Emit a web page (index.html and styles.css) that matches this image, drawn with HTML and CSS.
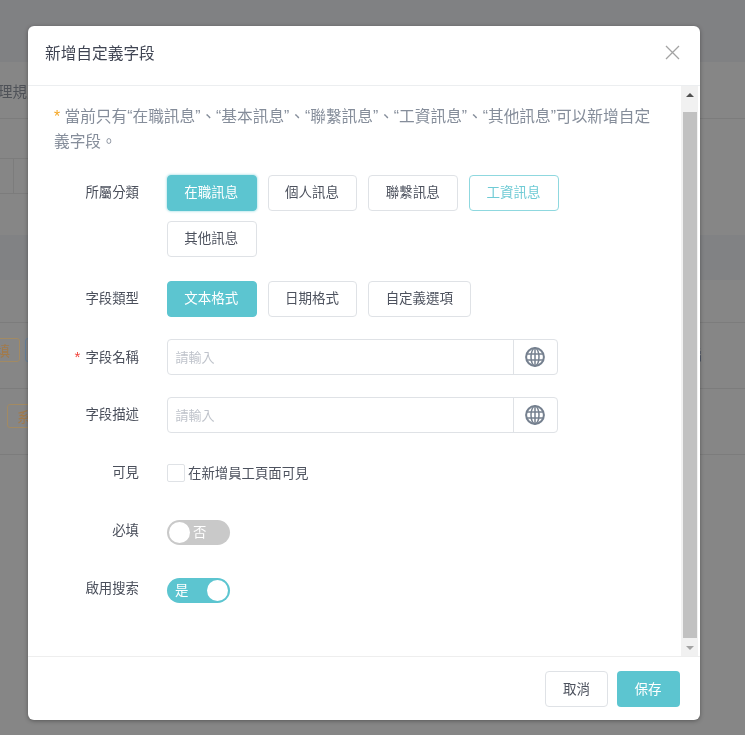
FILE: index.html
```html
<!DOCTYPE html>
<html lang="zh-Hant">
<head>
<meta charset="utf-8">
<title>新增自定義字段</title>
<link rel="stylesheet" href="styles.css">
</head>
<body>
<div class="page">
  <div class="bg">
    <div class="bg-band bg-top"></div>
    <div class="bg-band bg-title"><span class="bg-heading">理規則</span></div>
    <div class="bg-band bg-gap"></div>
    <div class="bg-band bg-head"><div class="bg-cells"><span class="bg-cell"></span></div></div>
    <div class="bg-band bg-spacer"></div>
    <div class="bg-band bg-blue"></div>
    <div class="bg-band bg-after"></div>
    <div class="bg-band bg-row">
      <span class="tag tag-a">必填</span><span class="tag tag-b">可見</span>
      <span class="bg-end">編</span>
    </div>
    <div class="bg-band bg-row"><span class="tag tag-c">系統</span></div>
  </div>

  <div class="modal">
    <header class="modal-head">
      <h1 class="modal-title">新增自定義字段</h1>
      <svg class="close" width="15" height="15" viewBox="0 0 15 15"><path d="M1 1l13 13M14 1L1 14" fill="none" stroke="#a3a3a3" stroke-width="1.3"/></svg>
    </header>
    <div class="modal-body">
      <div class="content">
        <p class="notice"><span class="star">*</span> 當前只有“在職訊息”、“基本訊息”、“聯繫訊息”、“工資訊息”、“其他訊息”可以新增自定義字段。</p>
        <div class="row row-wrap">
          <span class="label">所屬分類</span>
          <div class="options">
            <span class="opt opt-on opt-glow">在職訊息</span>
            <span class="opt">個人訊息</span>
            <span class="opt">聯繫訊息</span>
            <span class="opt opt-hover">工資訊息</span>
            <span class="opt">其他訊息</span>
          </div>
        </div>
        <div class="row">
          <span class="label">字段類型</span>
          <div class="options">
            <span class="opt opt-on">文本格式</span>
            <span class="opt">日期格式</span>
            <span class="opt opt-wide">自定義選項</span>
          </div>
        </div>
        <div class="row">
          <span class="label label-field"><span class="req">*</span>字段名稱</span>
          <div class="field">
            <input class="input" placeholder="請輸入">
            <span class="addon"><svg width="20" height="20" viewBox="0 0 20 20" fill="none" stroke="#75808f" stroke-width="1.5"><circle cx="10" cy="10" r="8.9" stroke-width="2"/><ellipse cx="10" cy="10" rx="4" ry="8.9"/><path d="M1.5 7h17M1.5 13h17M10 1v18"/></svg></span>
          </div>
        </div>
        <div class="row">
          <span class="label label-field">字段描述</span>
          <div class="field">
            <input class="input" placeholder="請輸入">
            <span class="addon"><svg width="20" height="20" viewBox="0 0 20 20" fill="none" stroke="#75808f" stroke-width="1.5"><circle cx="10" cy="10" r="8.9" stroke-width="2"/><ellipse cx="10" cy="10" rx="4" ry="8.9"/><path d="M1.5 7h17M1.5 13h17M10 1v18"/></svg></span>
          </div>
        </div>
        <div class="row">
          <span class="label">可見</span>
          <span class="check"><span class="box"></span><span class="check-text">在新增員工頁面可見</span></span>
        </div>
        <div class="row">
          <span class="label">必填</span>
          <span class="switch switch-off"><span class="knob"></span><span class="switch-text">否</span></span>
        </div>
        <div class="row">
          <span class="label">啟用搜索</span>
          <span class="switch switch-on"><span class="switch-text">是</span><span class="knob"></span></span>
        </div>
      </div>
      <div class="scrollbar">
        <span class="sb-btn"><span class="arrow-up"></span></span>
        <span class="sb-track"><span class="sb-thumb"></span></span>
        <span class="sb-btn"><span class="arrow-down"></span></span>
      </div>
    </div>
    <footer class="modal-foot">
      <span class="btn btn-cancel">取消</span>
      <span class="btn btn-save">保存</span>
    </footer>
  </div>
</div>
</body>
</html>
```
FILE: styles.css
```css
* { box-sizing: border-box; }
html, body { margin: 0; padding: 0; }
body {
  width: 745px;
  height: 735px;
  overflow: hidden;
  background: #868686;
  font-family: "Liberation Sans", "Noto Sans CJK TC", sans-serif;
}
.page {
  position: relative;
  width: 745px;
  height: 735px;
  overflow: hidden;
  filter: blur(0.35px);
}

/* dimmed page behind the dialog */
.bg { display: flex; flex-direction: column; }
.bg-band { display: flex; align-items: center; flex: none; }
.bg-top { height: 62px; background: #808183; }
.bg-title { height: 57px; border-bottom: 1px solid #7c7c7c; }
.bg-heading { margin-left: -2px; font-size: 14.5px; color: #4f5258; }
.bg-gap { height: 39px; }
.bg-head { height: 36px; }
.bg-cells { width: 100px; height: 36px; border-top: 1px solid #7c7c7c; border-bottom: 1px solid #7c7c7c; }
.bg-cell { display: block; width: 14px; height: 34px; border-right: 1px solid #7c7c7c; }
.bg-spacer { height: 41px; }
.bg-blue { height: 45px; background: #818284; }
.bg-after { height: 43px; border-bottom: 1px solid #7c7c7c; }
.bg-row { align-items: flex-start; height: 66px; padding-top: 15px; border-bottom: 1px solid #7c7c7c; font-size: 14px; }
.tag {
  display: flex;
  flex: none;
  align-items: center;
  justify-content: center;
  width: 48px;
  height: 24px;
  padding-bottom: 1px;
  border: 1px solid #a28a63;
  border-radius: 3px;
  color: #a27a4a;
}
.tag-a { margin-left: -28px; }
.tag-b { margin-left: 5px; border-color: #66819c; color: #5d7d9c; }
.tag-c { margin-left: 7px; }
.bg-end { margin: 7px 43px 0 auto; line-height: 20px; color: #4b5568; }

/* dialog */
.modal {
  position: absolute;
  left: 28px;
  top: 26px;
  width: 671.5px;
  height: 694px;
  display: flex;
  flex-direction: column;
  background: #fff;
  border-radius: 6px;
  box-shadow: 0 1px 4px rgba(0, 0, 0, 0.35);
}
.modal-head {
  display: flex;
  align-items: center;
  justify-content: space-between;
  flex: none;
  height: 60px;
  padding: 0 20px 6px 17px;
  border-bottom: 1px solid #eceef0;
}
.modal-title { margin: 0; font-size: 15.7px; font-weight: 400; color: #3f4452; }
.modal-body { display: flex; flex: none; height: 571px; padding-right: 1.5px; border-bottom: 1px solid #eeeeee; }
.content { flex: 1; min-width: 0; padding-top: 18px; }
.notice {
  margin: 0 0 21px 26px;
  width: 604px;
  font-size: 15.7px;
  line-height: 25px;
  color: #858d9a;
}
.star { color: #f5a623; }

.row { display: flex; align-items: flex-start; margin-bottom: 22px; }
.row-wrap { margin-bottom: 24px; }
.label {
  flex: none;
  width: 111px;
  margin-right: 28px;
  height: 36px;
  line-height: 35px;
  text-align: right;
  font-size: 13.4px;
  color: #4a4f5b;
}
.label-field { line-height: 36px; }
.req { margin-right: 5px; font-size: 15px; color: #f0443c; }
.options { display: flex; flex-wrap: wrap; gap: 10px 11px; width: 392px; }
.opt {
  display: flex;
  align-items: center;
  justify-content: center;
  width: 89.7px;
  height: 36px;
  padding: 0 1px 4px 0;
  border: 1px solid #dfe2e6;
  border-radius: 4px;
  background: #fff;
  font-size: 13.5px;
  color: #4d525e;
}
.opt-wide { width: 103px; }
.opt-on { border-color: #5cc5d0; background: #5cc5d0; color: #fff; }
.opt-glow { box-shadow: 0 0 2px 1px rgba(92, 197, 208, 0.35); }
.opt-hover { border-color: #8fd8df; color: #6fcbd5; }

.field {
  display: flex;
  width: 391px;
  height: 36px;
  border: 1px solid #dfe2e6;
  border-radius: 4px;
}
.input {
  flex: 1;
  min-width: 0;
  padding: 0 7.5px;
  border: 0;
  border-right: 1px solid #dfe2e6;
  border-radius: 4px 0 0 4px;
  outline: 0;
  font: inherit;
  font-size: 13px;
  background: transparent;
}
.input::placeholder { color: #bfc3cb; opacity: 1; }
.addon { display: flex; align-items: center; justify-content: center; flex: none; width: 43.5px; }

.check { display: flex; align-items: center; height: 36px; font-size: 13.4px; color: #4d525e; }
.check-text { margin-bottom: 2px; }
.box { width: 18px; height: 18px; margin-right: 3px; border: 1px solid #dfe2e6; border-radius: 2px; }

.switch {
  display: flex;
  align-items: center;
  width: 63px;
  height: 25px;
  margin-top: 7px;
  padding: 0 2px;
  border-radius: 13px;
  font-size: 13.4px;
  color: #fff;
}
.switch-off { background: #c9c9c9; }
.switch-on { justify-content: space-between; background: #5cc5d0; }
.knob { flex: none; width: 21px; height: 21px; border-radius: 50%; background: #fff; }
.switch-text { margin-bottom: 3px; }
.switch-off .switch-text { margin-left: 3px; }
.switch-on .switch-text { margin-left: 6px; }

.scrollbar { display: flex; flex-direction: column; flex: none; width: 17px; background: #f1f1f1; }
.sb-btn { display: flex; align-items: center; justify-content: center; flex: none; height: 17px; }
.sb-track { display: flex; flex-direction: column; flex: 1; padding: 9px 1px 1px 2px; }
.sb-thumb { display: block; flex: 1; background: #c1c1c1; }
.arrow-up { width: 0; height: 0; border: 4px solid transparent; border-top: 0; border-bottom: 4px solid #505050; }
.arrow-down { width: 0; height: 0; border: 4px solid transparent; border-bottom: 0; border-top: 4px solid #a3a3a3; }

.modal-foot {
  display: flex;
  align-items: center;
  justify-content: flex-end;
  flex: 1;
  gap: 8.5px;
  padding: 1px 20px 0 0;
}
.btn {
  display: flex;
  align-items: center;
  justify-content: center;
  width: 63px;
  height: 36px;
  padding-bottom: 3px;
  border-radius: 4px;
  font-size: 13.5px;
}
.btn-cancel { border: 1px solid #dfe2e6; color: #4d525e; }
.btn-save { background: #5cc5d0; color: #fff; }
```
